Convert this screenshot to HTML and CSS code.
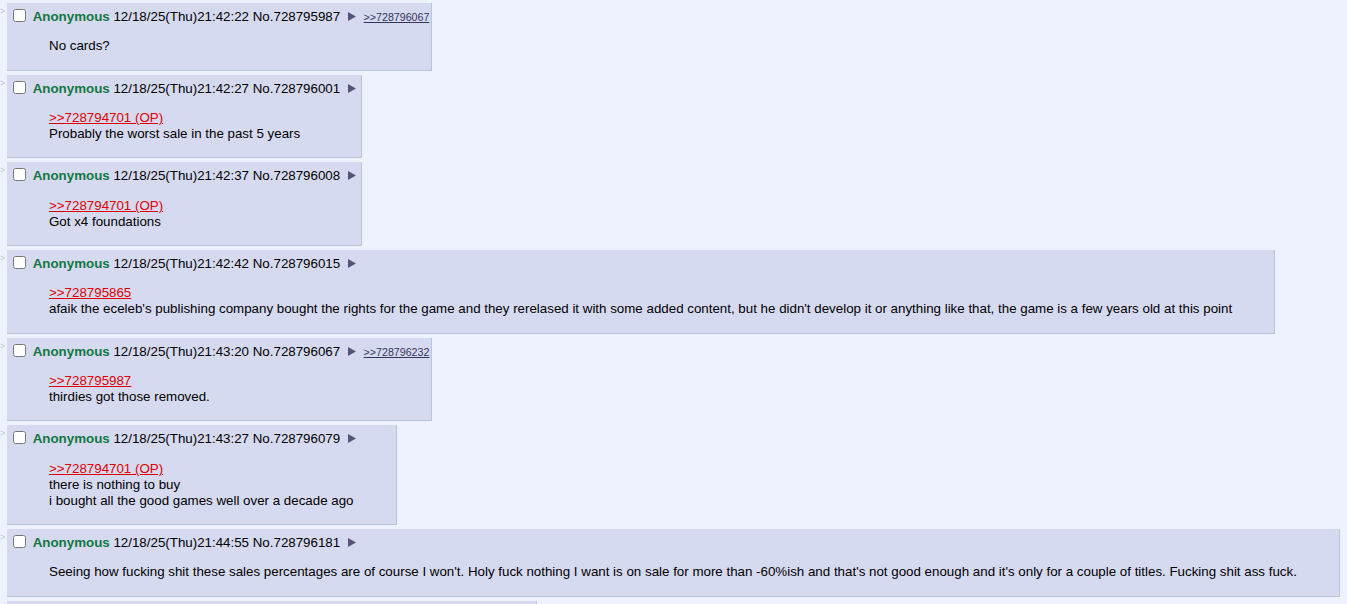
FILE: index.html
```html
<!DOCTYPE html>
<html lang="en">
<head>
  <meta charset="UTF-8">
  <title>/v/ - Thread</title>
  <link rel="stylesheet" href="styles.css">
</head>
<body>

  <div class="thread">

    <div class="postContainer">
      <div class="sideArrows">&gt;</div>
      <div class="post reply">
        <div class="postInfo">
          <input type="checkbox">
          <span class="name">Anonymous</span>
          <span class="dateTime">12/18/25(Thu)21:42:22</span>
          <span class="postNum">No.728795987</span>
          <svg class="menuBtn" width="8" height="9" viewBox="0 0 8 9"><path d="M0 0 L8 4.5 L0 9 Z"/></svg>
          <a class="backlink" href="#p728796067">&gt;&gt;728796067</a>
        </div>
        <blockquote class="postMessage">No cards?</blockquote>
      </div>
    </div>

    <div class="postContainer">
      <div class="sideArrows">&gt;</div>
      <div class="post reply">
        <div class="postInfo">
          <input type="checkbox">
          <span class="name">Anonymous</span>
          <span class="dateTime">12/18/25(Thu)21:42:27</span>
          <span class="postNum">No.728796001</span>
          <svg class="menuBtn" width="8" height="9" viewBox="0 0 8 9"><path d="M0 0 L8 4.5 L0 9 Z"/></svg>
        </div>
        <blockquote class="postMessage"><a class="quotelink" href="#p728794701">&gt;&gt;728794701 (OP)</a><br>Probably the worst sale in the past 5 years</blockquote>
      </div>
    </div>

    <div class="postContainer">
      <div class="sideArrows">&gt;</div>
      <div class="post reply">
        <div class="postInfo">
          <input type="checkbox">
          <span class="name">Anonymous</span>
          <span class="dateTime">12/18/25(Thu)21:42:37</span>
          <span class="postNum">No.728796008</span>
          <svg class="menuBtn" width="8" height="9" viewBox="0 0 8 9"><path d="M0 0 L8 4.5 L0 9 Z"/></svg>
        </div>
        <blockquote class="postMessage"><a class="quotelink" href="#p728794701">&gt;&gt;728794701 (OP)</a><br>Got x4 foundations</blockquote>
      </div>
    </div>

    <div class="postContainer">
      <div class="sideArrows">&gt;</div>
      <div class="post reply">
        <div class="postInfo">
          <input type="checkbox">
          <span class="name">Anonymous</span>
          <span class="dateTime">12/18/25(Thu)21:42:42</span>
          <span class="postNum">No.728796015</span>
          <svg class="menuBtn" width="8" height="9" viewBox="0 0 8 9"><path d="M0 0 L8 4.5 L0 9 Z"/></svg>
        </div>
        <blockquote class="postMessage"><a class="quotelink" href="#p728795865">&gt;&gt;728795865</a><br>afaik the eceleb's publishing company bought the rights for the game and they rerelased it with some added content, but he didn't develop it or anything like that, the game is a few years old at this point</blockquote>
      </div>
    </div>

    <div class="postContainer">
      <div class="sideArrows">&gt;</div>
      <div class="post reply">
        <div class="postInfo">
          <input type="checkbox">
          <span class="name">Anonymous</span>
          <span class="dateTime">12/18/25(Thu)21:43:20</span>
          <span class="postNum">No.728796067</span>
          <svg class="menuBtn" width="8" height="9" viewBox="0 0 8 9"><path d="M0 0 L8 4.5 L0 9 Z"/></svg>
          <a class="backlink" href="#p728796232">&gt;&gt;728796232</a>
        </div>
        <blockquote class="postMessage"><a class="quotelink" href="#p728795987">&gt;&gt;728795987</a><br>thirdies got those removed.</blockquote>
      </div>
    </div>

    <div class="postContainer">
      <div class="sideArrows">&gt;</div>
      <div class="post reply">
        <div class="postInfo">
          <input type="checkbox">
          <span class="name">Anonymous</span>
          <span class="dateTime">12/18/25(Thu)21:43:27</span>
          <span class="postNum">No.728796079</span>
          <svg class="menuBtn" width="8" height="9" viewBox="0 0 8 9"><path d="M0 0 L8 4.5 L0 9 Z"/></svg>
        </div>
        <blockquote class="postMessage"><a class="quotelink" href="#p728794701">&gt;&gt;728794701 (OP)</a><br>there is nothing to buy<br>i bought all the good games well over a decade ago</blockquote>
      </div>
    </div>

    <div class="postContainer">
      <div class="sideArrows">&gt;</div>
      <div class="post reply">
        <div class="postInfo">
          <input type="checkbox">
          <span class="name">Anonymous</span>
          <span class="dateTime">12/18/25(Thu)21:44:55</span>
          <span class="postNum">No.728796181</span>
          <svg class="menuBtn" width="8" height="9" viewBox="0 0 8 9"><path d="M0 0 L8 4.5 L0 9 Z"/></svg>
        </div>
        <blockquote class="postMessage">Seeing how fucking shit these sales percentages are of course I won't. Holy fuck nothing I want is on sale for more than -60%ish and that's not good enough and it's only for a couple of titles. Fucking shit ass fuck.</blockquote>
      </div>
    </div>

    <div class="postContainer">
      <div class="sideArrows">&gt;</div>
      <div class="post reply">
        <div class="postInfo">
          <input type="checkbox">
          <span class="name">Anonymous</span>
          <span class="dateTime">12/18/25(Thu)21:45:10</span>
          <span class="postNum">No.728796232</span>
          <svg class="menuBtn" width="8" height="9" viewBox="0 0 8 9"><path d="M0 0 L8 4.5 L0 9 Z"/></svg>
        </div>
        <blockquote class="postMessage"><a class="quotelink" href="#p728796067">&gt;&gt;728796067</a><br>they were removed years ago, nothing to do with where you live at all, sorry</blockquote>
      </div>
    </div>

  </div>

</body>
</html>
```

FILE: styles.css
```css
html {
  overflow: hidden;
}

body {
  background-color: #eef2ff;
  color: #000;
  font-family: Arial, "Liberation Sans", sans-serif;
  font-size: 13.33px;
  line-height: 16px;
  margin: 0;
}

.thread {
  display: flex;
  flex-direction: column;
  align-items: flex-start;
  gap: 4px;
  padding-top: 3px;
}

.postContainer {
  display: flex;
  align-items: flex-start;
}

.sideArrows {
  width: 7px;
  overflow: hidden;
  color: #b7c5d9;
  font-size: 9px;
  line-height: 10px;
  margin-top: 3px;
}

.post.reply {
  background-color: #d6daf0;
  border-right: 1px solid #b7c5d9;
  border-bottom: 1px solid #b7c5d9;
  padding: 2px;
}

.postInfo {
  white-space: nowrap;
  height: 20px;
  line-height: 24px;
}

.postInfo input {
  margin: 4px 3px 2px 4px;
  vertical-align: top;
}

.name {
  color: #117743;
  font-weight: bold;
}

.menuBtn {
  fill: #555577;
  margin: 0 3px 0 4px;
  vertical-align: 0;
}

.backlink {
  color: #34345c;
  font-size: 10.67px;
  margin-left: 1px;
}

.postMessage {
  margin: 13.33px 40px;
}

.quotelink {
  color: #dd0000;
}
```
